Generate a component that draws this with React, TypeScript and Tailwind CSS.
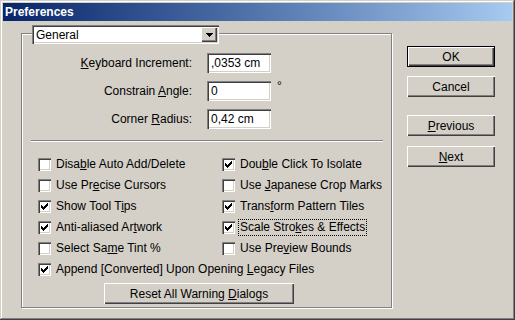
import React from "react";

const raised =
  "shadow-[inset_1px_1px_0_#ffffff,inset_-1px_-1px_0_#404040,inset_-2px_-2px_0_#808080]";
const sunken =
  "shadow-[inset_1px_1px_0_#808080,inset_2px_2px_0_#404040,inset_-1px_-1px_0_#ffffff,inset_-2px_-2px_0_#d4d0c8]";

function CheckBox({ on }: { on?: boolean }) {
  return (
    <span className={`block w-[13px] h-[13px] shrink-0 bg-white ${sunken}`}>
      {on && (
        <svg width="13" height="13" viewBox="0 0 13 13" shapeRendering="crispEdges">
          <rect x="3" y="5" width="1" height="3" fill="#000" />
          <rect x="4" y="6" width="1" height="3" fill="#000" />
          <rect x="5" y="7" width="1" height="3" fill="#000" />
          <rect x="6" y="6" width="1" height="3" fill="#000" />
          <rect x="7" y="5" width="1" height="3" fill="#000" />
          <rect x="8" y="4" width="1" height="3" fill="#000" />
          <rect x="9" y="3" width="1" height="3" fill="#000" />
        </svg>
      )}
    </span>
  );
}

function Option({
  on,
  focus,
  children,
}: {
  on?: boolean;
  focus?: boolean;
  children: React.ReactNode;
}) {
  return (
    <div className="flex items-center h-[21px]">
      <CheckBox on={on} />
      <span
        className={`ml-[4px] px-[1px] py-[1px] leading-[13px] whitespace-nowrap ${
          focus ? "outline-1 outline-dotted outline-black" : ""
        }`}
      >
        {children}
      </span>
    </div>
  );
}

function Field({ label, value, deg }: { label: React.ReactNode; value: string; deg?: boolean }) {
  return (
    <div className="flex items-center h-[20px]">
      <span className="w-[170px] text-right whitespace-nowrap">{label}</span>
      <div className={`ml-[15px] w-[64px] h-[20px] bg-white flex items-center pl-[4px] ${sunken}`}>
        {value}
      </div>
      {deg && <span className="ml-[6px] self-start -mt-[4px]">°</span>}
    </div>
  );
}

function Button({ children, primary, className = "" }: { children: React.ReactNode; primary?: boolean; className?: string }) {
  if (primary) {
    return (
      <div className={`border border-black ${className}`}>
        <div className={`h-[19px] flex items-center justify-center bg-[#d4d0c8] ${raised}`}>{children}</div>
      </div>
    );
  }
  return (
    <div className={`h-[21px] flex items-center justify-center bg-[#d4d0c8] ${raised} ${className}`}>
      {children}
    </div>
  );
}

export default function App() {
  return (
    <div
      className="w-[515px] h-[320px] bg-[#d4d0c8] p-[3px] flex flex-col text-[12px] text-black shadow-[inset_-1px_-1px_0_#404040,inset_1px_1px_0_#d4d0c8,inset_-2px_-2px_0_#808080,inset_2px_2px_0_#ffffff]"
      style={{ fontFamily: '"Liberation Sans", Arial, sans-serif' }}
    >
      {/* Title bar */}
      <div className="h-[18px] shrink-0 flex items-center pl-[2px] bg-gradient-to-r from-[#0a246a] to-[#a6caf0]">
        <span className="text-white font-bold text-[12px]">Preferences</span>
      </div>

      <div className="flex pl-[18px] pt-[4px]">
        {/* Group box */}
        <div className="w-[371px]">
          <div className={`relative z-10 ml-[11px] w-[187px] h-[19px] bg-white flex items-center p-[2px] ${sunken}`}>
            <span className="flex-1 pl-[2px]">General</span>
            <div className={`w-[16px] h-[15px] bg-[#d4d0c8] flex items-center justify-center ${raised}`}>
              <svg width="7" height="4" viewBox="0 0 7 4" shapeRendering="crispEdges">
                <path d="M0 0h7v1h-1v1h-1v1h-1v1h-1v-1h-1v-1h-1v-1h-1z" fill="#000" />
              </svg>
            </div>
          </div>

          <div className="-mt-[11px] h-[275px] border border-[#808080] shadow-[inset_1px_1px_0_#ffffff,1px_1px_0_#ffffff] flex flex-col">
            <div className="pt-[19px] flex flex-col gap-[8px]">
              <Field label={<><u>K</u>eyboard Increment:</>} value=",0353 cm" />
              <Field label={<>Constrain <u>A</u>ngle:</>} value="0" deg />
              <Field label={<>Corner <u>R</u>adius:</>} value="0,42 cm" />
            </div>

            <div className="mt-[11px] ml-[9px] w-[352px] h-[2px] border-t border-b border-t-[#808080] border-b-white" />

            <div className="mt-[12px] pl-[16px] grid grid-cols-[184px_1fr]">
              <Option>Disa<u>b</u>le Auto Add/Delete</Option>
              <Option on>Dou<u>b</u>le Click To Isolate</Option>
              <Option>Use Pr<u>e</u>cise Cursors</Option>
              <Option>Use <u>J</u>apanese Crop Marks</Option>
              <Option on>Show Tool T<u>i</u>ps</Option>
              <Option on>Trans<u>f</u>orm Pattern Tiles</Option>
              <Option on>Anti-aliased Ar<u>t</u>work</Option>
              <Option on focus>Scale Stro<u>k</u>es &amp; Effects</Option>
              <Option>Select Sa<u>m</u>e Tint %</Option>
              <Option>Use Pre<u>v</u>iew Bounds</Option>
              <div className="col-span-2">
                <Option on>Append [Converted] Upon Opening <u>L</u>egacy Files</Option>
              </div>
            </div>

            <Button className="mt-[3px] ml-[82px] w-[190px]">
              <span>Reset All Warning <u>D</u>ialogs</span>
            </Button>
          </div>
        </div>

        {/* Buttons */}
        <div className="ml-[15px] pt-[21px] w-[88px] flex flex-col">
          <Button primary>OK</Button>
          <Button className="mt-[9px]">Cancel</Button>
          <Button className="mt-[18px]">
            <span><u>P</u>revious</span>
          </Button>
          <Button className="mt-[10px]">
            <span><u>N</u>ext</span>
          </Button>
        </div>
      </div>
    </div>
  );
}
